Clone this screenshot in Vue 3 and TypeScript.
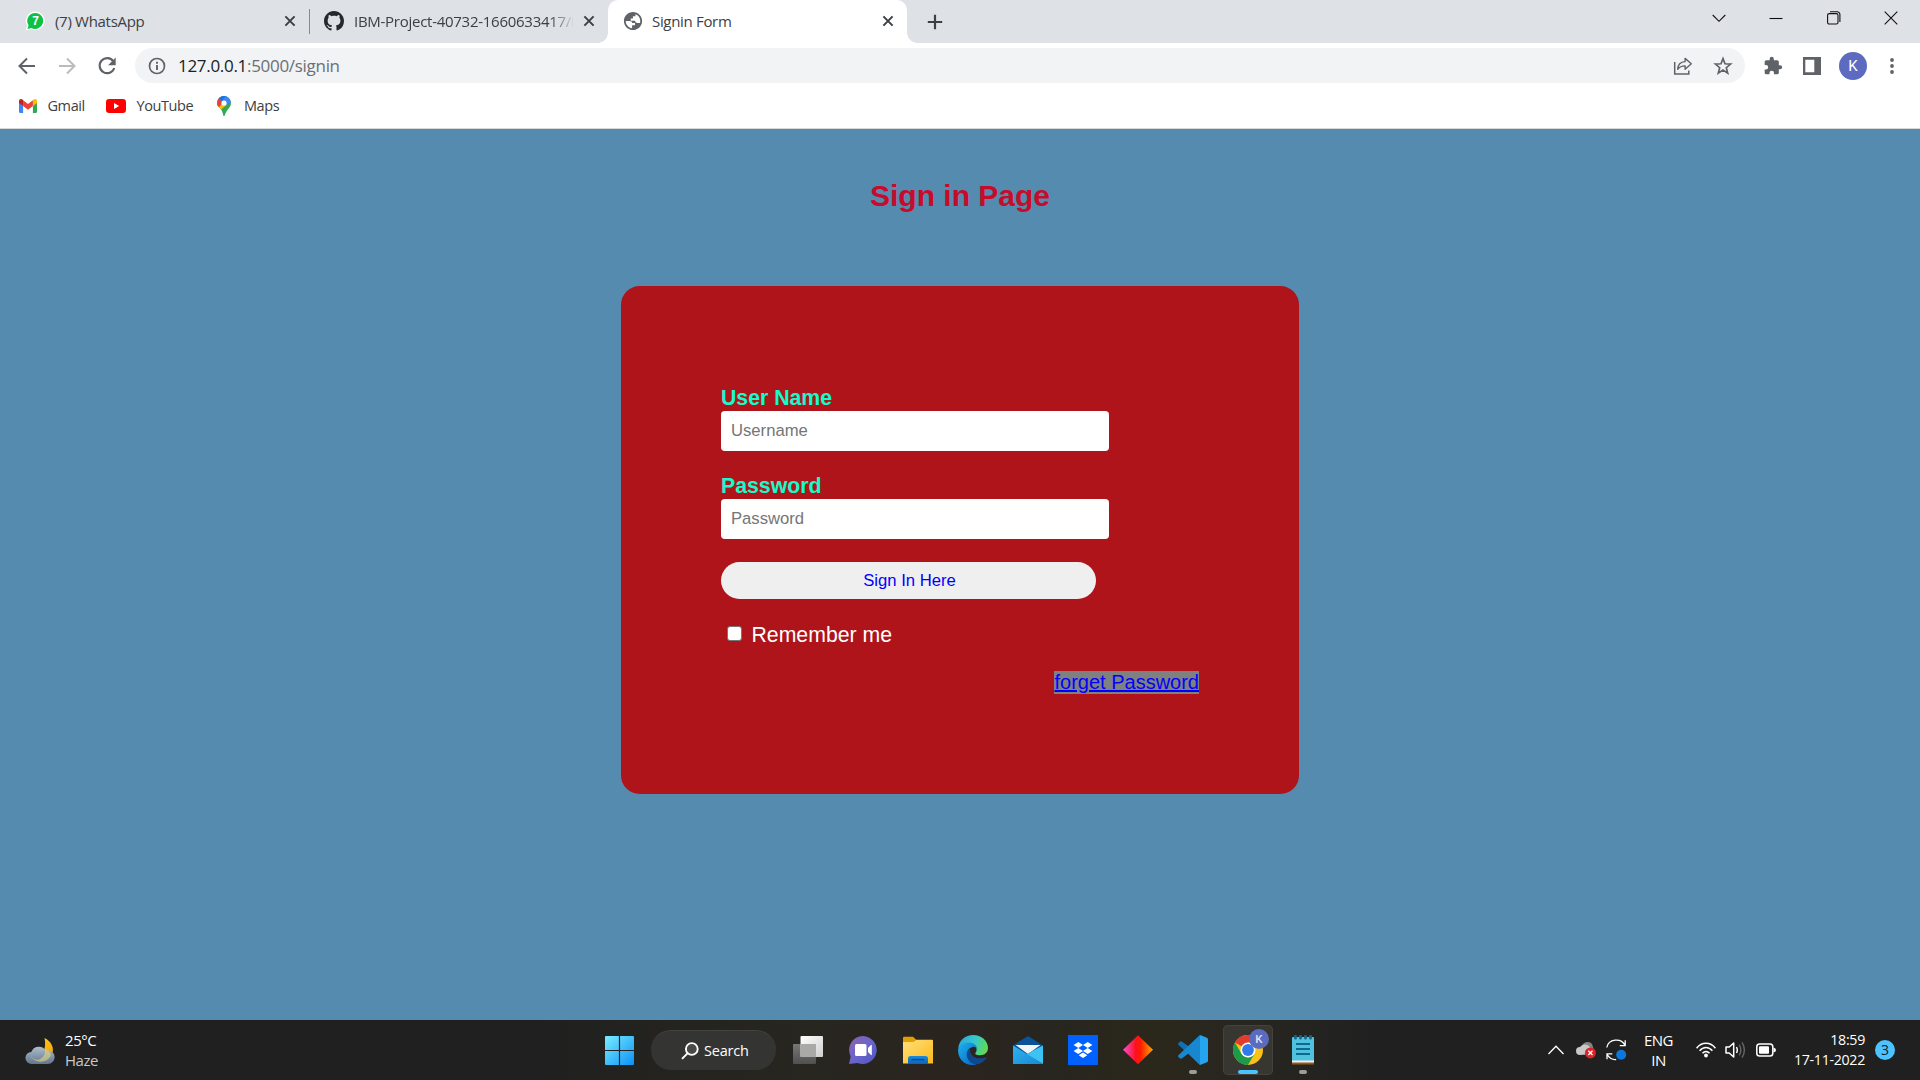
<script setup lang="ts">
import { ref } from 'vue'

interface Tab {
  id: string
  title: string
}

const tabs: Tab[] = [
  { id: 'whatsapp', title: '(7) WhatsApp' },
  { id: 'github', title: 'IBM-Project-40732-1660633417/I' },
  { id: 'globe', title: 'Signin Form' },
]
const activeTab = ref('globe')
const username = ref('')
const password = ref('')
const remember = ref(false)
</script>

<template>
  <div class="screen">
    <header class="tabstrip">
      <div
        v-for="tab in tabs"
        :key="tab.id"
        class="tab"
        :class="[tab.id, { active: tab.id === activeTab }]"
      >
        <svg v-if="tab.id === 'whatsapp'" class="fav" width="20" height="20" viewBox="0 0 20 20">
          <path d="M10.300 .6a9.300 9.300 0 1 1-4.400 17.500L.6 19.600l1.600-5A9.300 9.300 0 0 1 10.300 .6z" fill="#fff" />
          <path d="M10.300 1.900a8 8 0 1 1-4 15l-3.800 1 1.100-3.600A8 8 0 0 1 10.300 1.900z" fill="#0cc143" />
          <text x="10.500" y="14.400" text-anchor="middle" font-family="Liberation Sans" font-weight="700" font-size="12" fill="#fff">7</text>
        </svg>
        <svg v-else-if="tab.id === 'github'" class="fav" width="20" height="20" viewBox="0 0 16 16">
          <path fill="#24292f" d="M8 0C3.580 0 0 3.580 0 8c0 3.540 2.290 6.530 5.470 7.590.4.070.55-.17.55-.38 0-.19-.01-.82-.01-1.490-2.010.37-2.530-.49-2.690-.94-.09-.23-.48-.94-.82-1.130-.28-.15-.68-.52-.01-.53.63-.01 1.080.58 1.230.82.72 1.210 1.870.87 2.330.66.07-.52.28-.87.51-1.070-1.780-.2-3.640-.89-3.640-3.950 0-.87.31-1.590.82-2.150-.08-.2-.36-1.020.08-2.120 0 0 .67-.21 2.200.82.64-.18 1.320-.27 2-.27s1.360.09 2 .27c1.530-1.040 2.200-.82 2.200-.82.44 1.100.16 1.920.08 2.120.51.56.82 1.270.82 2.150 0 3.070-1.870 3.750-3.650 3.950.29.25.54.73.54 1.480 0 1.070-.01 1.930-.01 2.200 0 .21.15.46.55.38A8.010 8.010 0 0 0 16 8c0-4.420-3.580-8-8-8z" />
        </svg>
        <svg v-else class="fav" width="20" height="20" viewBox="1 1 22 22">
          <path fill="#5f6368" d="M12 2C6.480 2 2 6.480 2 12s4.480 10 10 10 10-4.480 10-10S17.520 2 12 2zm-1 17.930c-3.950-.49-7-3.850-7-7.930 0-.62.08-1.210.21-1.790L5 11h4.500l3 2v2.500l-2.500 1v3.430zM20 12c0 .8-.1 1.500-.3 2.200L17 13h-2l-1.500-2.500H10v-2.500l2.500-1.500V4.600C17 4.200 20 8 20 12z" fill-rule="evenodd" opacity="0" />
          <path fill="#5f6368" d="M12 2C6.480 2 2 6.480 2 12s4.480 10 10 10 10-4.480 10-10S17.520 2 12 2zm-1 17.930c-3.950-.49-7-3.850-7-7.930h4.500q2.500 0 2.700 2.200h3v2.500h-3.200zM19.700 14.200h-3.200q-2.200-.2-2.400-2.400H9.500V9.300h2.400V6.900h2.800V4.500c3.300 1 5.300 4 5.300 7.500q0 1.200-.3 2.200z" />
        </svg>
        <span class="tab-title">{{ tab.title }}</span>
        <svg class="close" width="12" height="12" viewBox="0 0 12 12">
          <path d="M1.400 1.400 10.600 10.600M10.600 1.400 1.400 10.600" stroke="#3c4043" stroke-width="2" fill="none" />
        </svg>
      </div>
      <svg class="plus" width="16" height="16" viewBox="0 0 16 16">
        <path d="M8 .8v14.400M.8 8h14.400" stroke="#3c4043" stroke-width="2.200" />
      </svg>
      <div class="win-controls">
        <svg width="14" height="14" viewBox="0 0 14 14"><path d="M.7 4 7 10.300 13.300 4" /></svg>
        <svg width="14" height="14" viewBox="0 0 14 14"><path d="M.5 7.500h13" /></svg>
        <svg width="14" height="14" viewBox="0 0 14 14">
          <rect x=".6" y="2.600" width="10.400" height="10.400" rx="1.600" />
          <path d="M3 .8h7.200A2.600 2.600 0 0 1 12.900 3.400V11" />
        </svg>
        <svg width="14" height="14" viewBox="0 0 14 14"><path d="M.7.7l12.600 12.600M13.300.7.7 13.300" /></svg>
      </div>
    </header>

    <div class="toolbar">
      <svg class="nav" width="24" height="24" viewBox="0 0 24 24">
        <path d="M20 12H5M12 4.500 4.500 12l7.500 7.500" stroke="#5f6368" stroke-width="2" fill="none" />
      </svg>
      <svg class="nav" width="24" height="24" viewBox="0 0 24 24">
        <path d="M4 12h15M12 4.500l7.500 7.500-7.500 7.500" stroke="#babcbe" stroke-width="2" fill="none" />
      </svg>
      <svg class="nav" width="24" height="24" viewBox="0 0 24 24">
        <path d="M18.300 7.300A7.500 7.500 0 1 0 19.300 14" stroke="#5f6368" stroke-width="2.100" fill="none" />
        <path d="M20.700 3.600v7.600h-7.600z" fill="#5f6368" />
      </svg>
      <div class="omnibox">
        <svg class="info" width="18" height="18" viewBox="0 0 18 18">
          <circle cx="9" cy="9" r="7.500" fill="none" stroke="#5f6368" stroke-width="1.700" />
          <path d="M9 8v5M9 4.800v1.900" stroke="#5f6368" stroke-width="1.900" />
        </svg>
        <span class="url"><b>127.0.0.1</b>:5000/signin</span>
        <svg class="share" width="20" height="20" viewBox="0 0 20 20">
          <path d="M1.700 6v11.900h14.100v-3.400" fill="none" stroke="#5f6368" stroke-width="1.500" />
          <path d="M4.700 13.300c.2-4.700 2.600-7.500 7.400-7.700V2.400l6.200 5.400-6.200 5.400V9.900c-3.300-.1-5.400.9-7.400 3.400z" fill="none" stroke="#5f6368" stroke-width="1.400" stroke-linejoin="round" />
        </svg>
        <svg class="star" width="20" height="20" viewBox="0 0 20 20">
          <path d="M10 2.600l2 5.200 5.600.3-4.300 3.600 1.400 5.400L10 14.100l-4.700 3 1.400-5.400-4.300-3.600 5.600-.3z" fill="none" stroke="#5f6368" stroke-width="1.700" />
        </svg>
      </div>
      <svg class="puzzle" width="20" height="20" viewBox="0 0 24 24">
        <path fill="#5f6368" d="M20.500 11H19V7a2 2 0 0 0-2-2h-4V3.500a2.500 2.500 0 0 0-5 0V5H4a2 2 0 0 0-2 2v3.800h1.500a2.700 2.700 0 0 1 0 5.400H2V20a2 2 0 0 0 2 2h3.800v-1.500a2.700 2.700 0 0 1 5.400 0V22H17a2 2 0 0 0 2-2v-4h1.500a2.500 2.500 0 0 0 0-5z" />
      </svg>
      <svg class="panel" width="18" height="18" viewBox="0 0 18 18">
        <path fill="#5f6368" fill-rule="evenodd" d="M0 0h18v18H0zM2.300 2.800v12.400h9V2.800z" />
      </svg>
      <span class="avatar">K</span>
      <svg class="dots" width="4" height="18" viewBox="0 0 4 18">
        <g fill="#5f6368"><circle cx="2" cy="3" r="1.900" /><circle cx="2" cy="9" r="1.900" /><circle cx="2" cy="15" r="1.900" /></g>
      </svg>
    </div>

    <nav class="bookmarks">
      <a class="bm gmail">
        <svg width="18" height="14" viewBox="0 0 18 14">
          <path d="M0 1.800V12.800C0 13.500.5 14 1.200 14H4.100V7z" fill="#4285f4" />
          <path d="M18 1.800V12.800C18 13.500 17.500 14 16.800 14H13.900V7z" fill="#34a853" />
          <path d="M13.900 1.200V7L18 3.900V2C18 .1 15.900-.6 14.500.6z" fill="#fbbc04" />
          <path d="M4.100 7V1.200L9 5l4.900-3.800V7L9 10.700z" fill="#ea4335" />
          <path d="M0 2v1.900L4.100 7V1.200L3.500.6C2.100-.6 0 .1 0 2z" fill="#c5221f" />
        </svg>
        <span>Gmail</span>
      </a>
      <a class="bm youtube">
        <svg width="20" height="14" viewBox="0 0 20 14">
          <rect width="20" height="14" rx="3.200" fill="#f00" /><path d="M8 4v6l5.200-3z" fill="#fff" />
        </svg>
        <span>YouTube</span>
      </a>
      <a class="bm maps">
        <svg width="14" height="20" viewBox="0 0 14 20">
          <defs><clipPath id="pin"><path d="M7 0a7 7 0 0 1 7 7c0 4.700-4.600 6.400-6.300 12.500q-.7 1-1.400 0C5.600 15.500 4.500 14 3 12.200 1.500 10.500 0 9.500 0 7a7 7 0 0 1 7-7z" /></clipPath></defs>
          <g clip-path="url(#pin)">
            <path d="M0 0h14v20H0z" fill="#34a853" />
            <path d="M-1 12 7 3l3 5.500L2.400 15z" fill="#fbbc04" />
            <path d="M-1 0h5l3 5-6 7.500-2-2z" fill="#ea4335" />
            <path d="M2 2.500 7-1h4l1 3.300L7 8z" fill="#4285f4" />
            <path d="M7 7l4.700-5.600L15 6 9 9z" fill="#4285f4" />
            <path d="M1.500 2.400 4.800 5 9 0H4z" fill="#1a73e8" />
          </g>
          <circle cx="7" cy="7" r="2.600" fill="#fff" />
        </svg>
        <span>Maps</span>
      </a>
    </nav>

    <main class="page">
      <h2>Sign in Page</h2>
      <form class="login" @submit.prevent>
        <label class="field-label" for="uname">User Name</label>
        <input id="uname" v-model="username" class="field" type="text" placeholder="Username">
        <label class="field-label second" for="pass">Password</label>
        <input id="pass" v-model="password" class="field" type="password" placeholder="Password">
        <button class="submit" type="submit">Sign In Here</button>
        <label class="remember">
          <input v-model="remember" type="checkbox">
          <span>Remember me</span>
        </label>
        <a class="forgot" href="#">forget Password</a>
      </form>
    </main>

    <footer class="taskbar">
      <div class="weather">
        <svg width="30" height="28" viewBox="0 0 30 28">
          <defs>
            <linearGradient id="cloud" x1="0" y1="0" x2="0" y2="1"><stop offset="0" stop-color="#aebdcd" /><stop offset="1" stop-color="#61778d" /></linearGradient>
            <linearGradient id="moon" x1="0" y1="0" x2="1" y2="1"><stop offset="0" stop-color="#ffd21c" /><stop offset="1" stop-color="#f59a0b" /></linearGradient>
          </defs>
          <path d="M19.500 1C26 4 30 11 27 17.500 24 24 16 27 9 23c8-2 13-11 10.500-22z" fill="url(#moon)" />
          <path d="M6.500 27a6 6 0 0 1-.2-12 8 8 0 0 1 14.500-1.300A6.800 6.800 0 1 1 22.500 27z" fill="url(#cloud)" />
          <path d="M19.500 11.500q2.200 7-5 11-5 1.500-9-3.500c3 6.500 16 9 20.500-1-1-4-4-5-6.500-6.500z" fill="#dccf82" opacity=".65" />
        </svg>
        <div><span class="temp">25°C</span><span class="cond">Haze</span></div>
      </div>

      <div class="apps">
        <svg class="start" width="29" height="29" viewBox="0 0 29 29">
          <defs><linearGradient id="win" x1="0" y1="0" x2="1" y2="1"><stop offset="0" stop-color="#79eeff" /><stop offset="1" stop-color="#0b90f8" /></linearGradient></defs>
          <path d="M0 1q0-1 1-1h12.900v13.900H0zM15.100 0H28q1 0 1 1v12.900H15.100zM0 15.100h13.900V29H1q-1 0-1-1zM15.100 15.100H29V28q0 1-1 1H15.100z" fill="url(#win)" />
        </svg>
        <div class="search">
          <svg width="18" height="18" viewBox="0 0 18 18"><circle cx="10.800" cy="7" r="5.900" fill="#4a4a46" /><path d="M6.500 11.300 1 16.800" /></svg>
          <span>Search</span>
        </div>

        <div class="app">
          <svg width="30" height="30" viewBox="0 0 30 30">
            <defs>
              <linearGradient id="tvA" x1="0" y1="0" x2="1" y2="1"><stop stop-color="#fff" /><stop offset="1" stop-color="#cfcfcf" /></linearGradient>
              <linearGradient id="tvB" x1="0" y1="0" x2="0" y2="1"><stop stop-color="#777" /><stop offset="1" stop-color="#505050" /></linearGradient>
            </defs>
            <rect x="0" y="9" width="23" height="20" rx="1" fill="url(#tvB)" /><rect x="7.500" y="1" width="22.500" height="21" rx="1" fill="url(#tvA)" />
            <path d="M7.500 9H23v13H7.500z" fill="#a9a9a8" />
          </svg>
        </div>
        <div class="app">
          <svg width="30" height="30" viewBox="0 0 30 30">
            <defs><linearGradient id="chat" x1="0" y1="0" x2="1" y2="1"><stop offset="0" stop-color="#8f62ad" /><stop offset=".5" stop-color="#6a65cb" /><stop offset="1" stop-color="#4f55c4" /></linearGradient></defs>
            <path d="M15 1A14 14 0 1 1 9.500 28L1 29l1.700-7.500A14 14 0 0 1 15 1z" fill="url(#chat)" />
            <rect x="7" y="9" width="11.500" height="12" rx="1.500" fill="#fff" /><path d="M20 13l3-3q.8-.5.800.5v9q0 1-.8.500l-3-3z" fill="#fff" />
          </svg>
        </div>
        <div class="app">
          <svg width="30" height="30" viewBox="0 0 30 30">
            <defs>
              <linearGradient id="fold" x1="0" y1="0" x2="1" y2="1"><stop stop-color="#ffe07c" /><stop offset="1" stop-color="#fcb919" /></linearGradient>
              <linearGradient id="tray" x1="0" y1="0" x2="0" y2="1"><stop stop-color="#1a8ae0" /><stop offset="1" stop-color="#0c64b5" /></linearGradient>
            </defs>
            <path d="M0 3q0-1.200 1.200-1.200H10L13.500 5v5H0z" fill="#dfa000" />
            <path d="M0 7h10.500l3-2.200H29q1 0 1 1V28.500H0z" fill="url(#fold)" />
            <path d="M5 29v-5.500Q5 21 7.500 21h15q2.500 0 2.500 2.500V29z" fill="url(#tray)" /><path d="M8.500 24.600h13" stroke="#084a88" stroke-width="1.400" />
          </svg>
        </div>
        <div class="app">
          <svg width="30" height="30" viewBox="0 0 30 30">
            <defs>
              <linearGradient id="eg1" x1="0" y1=".3" x2="1" y2=".6"><stop stop-color="#2ba7dd" /><stop offset=".5" stop-color="#35c8cb" /><stop offset="1" stop-color="#62dc4d" /></linearGradient>
              <linearGradient id="eg2" x1="0" y1="0" x2="1" y2="1"><stop stop-color="#1cb3f0" /><stop offset="1" stop-color="#0b61bd" /></linearGradient>
            </defs>
            <path d="M.2 13C1.300 5 7.500 0 15 0c8.500 0 15 6 15 12.700 0 4.800-3.500 7.500-8 7.500-4 0-5.300-1.400-4.500-2.500 2.700-3.500.5-7-4-7.700C8.500 9 3 10 .2 13z" fill="url(#eg1)" />
            <path d="M.1 14.200C1.500 9.500 6.500 7.200 11.300 7.400c5 .2 8 3.600 8 6.800-1.300-2.300-3-2.700-4.800-2.200-4 1-6 5-5 9 1.200 4.500 4.500 7.200 9 8.400C9 32 .3 25.500.1 16z" fill="url(#eg2)" />
            <path d="M12.200 12.900C9 15 8.400 18.500 9 21.500c1.300 5.200 6 8.500 10.500 7.700 3.800-.8 6.800-3 9-6.300.3-.6-.2-1-.8-.7-7 3-14.700 0-15.500-6.300-.1-1.300 0-2.200 0-3z" fill="#10488f" />
          </svg>
        </div>
        <div class="app">
          <svg width="30" height="30" viewBox="0 0 30 30">
            <defs><linearGradient id="ml" x1="0" y1="0" x2="1" y2="1"><stop stop-color="#2fb4ee" /><stop offset="1" stop-color="#1689d4" /></linearGradient></defs>
            <path d="M0 10.500 15 1l15 9.500V20H0z" fill="#0c5296" /><path d="M2.500 10h25L15 19z" fill="#f4f4f4" />
            <path d="M30 10.500V29L13 19.300z" fill="#3cc3f2" /><path d="M0 10.500V29h30z" fill="url(#ml)" />
          </svg>
        </div>
        <div class="app">
          <svg width="30" height="30" viewBox="0 0 30 30">
            <path d="M0 0h30v30H0z" fill="#0061ff" />
            <path d="M10.300 7l4.700 3-4.700 3-4.700-3zM19.700 7l4.700 3-4.700 3-4.700-3zM10.300 13l4.700 3-4.700 3-4.700-3zM19.700 13l4.700 3-4.700 3-4.700-3zM15 17.400l4.300 2.900L15 23l-4.300-2.700z" fill="#fff" />
          </svg>
        </div>
        <div class="app">
          <svg width="30" height="30" viewBox="0 0 30 30">
            <defs><linearGradient id="dia"><stop offset="0" stop-color="#f653d8" /><stop offset=".42" stop-color="#ff1020" /><stop offset=".58" stop-color="#ff1a00" /><stop offset="1" stop-color="#ffa800" /></linearGradient></defs>
            <path d="M15 .2 30 14.700 15 29.200 0 14.700z" fill="url(#dia)" />
          </svg>
        </div>
        <div class="app running">
          <svg width="30" height="30" viewBox="0 0 30 30">
            <path d="M22 0 10.500 11.300 3.800 6.500Q2.500 6 1.200 7.200L.4 8Q-.2 9 .6 10L22 30l.6-8.500z" fill="#0f70b3" />
            <path d="M22 30 10.500 18.500 3.800 23.500q-1.300.5-2.600-.7L.4 22q-.6-1 .2-2L22 0l.6 8.500z" fill="#1787cf" />
            <path d="M22 0l7 2.800q1 .6 1 1.700v21q0 1.100-1 1.700L22 30z" fill="#25a5f0" />
          </svg>
        </div>
        <div class="app current">
          <svg width="30" height="30" viewBox="0 0 30 30">
            <circle cx="15" cy="15" r="15" fill="#fbc116" />
            <path d="M15 15 2 7.500A15 15 0 0 1 28 7.500H15z" fill="#e33b2e" />
            <path d="M2 7.500A15 15 0 0 0 15 30l6.500-11.300-6.500 3.800-6.500-3.800z" fill="#1f9a48" />
            <circle cx="15" cy="15" r="7.500" fill="#fff" /><circle cx="15" cy="15" r="5.900" fill="#3279ea" />
          </svg>
          <span class="mini-avatar">K</span>
        </div>
        <div class="app running">
          <svg width="22" height="30" viewBox="0 0 22 30">
            <path d="M0 26h22v3.500H0z" fill="#9c5418" /><path d="M0 25h22v2.500H0z" fill="#eee" />
            <path d="M0 3q0-1 1-1h20q1 0 1 1v22.500H0z" fill="#50c1de" />
            <path d="M4 9h14M4 14h14M4 19h14" stroke="#0c6a8c" stroke-width="1.800" />
            <path d="M3.500 1.200v2M8.500 1.200v2M13.500 1.200v2M18.500 1.200v2" stroke="#136989" stroke-width="2.800" stroke-linecap="round" />
          </svg>
        </div>
      </div>

      <div class="tray">
        <svg class="up" width="16" height="10" viewBox="0 0 16 10"><path d="M.5 9 8 1.200 15.500 9" stroke="#fff" stroke-width="1.300" fill="none" /></svg>
        <svg class="cloud" width="20" height="18" viewBox="0 0 20 18">
          <path d="M8 12a4 4 0 0 1-2-7.500A6 6 0 0 1 16 3l3 9z" fill="#858585" /><path d="M4 14a4 4 0 0 1 0-8 6 6 0 0 1 9.500-.5L17 13z" fill="#c9c9c9" />
          <circle cx="14.400" cy="11.900" r="5.500" fill="#dc2329" /><path d="M12.300 9.800l4.200 4.200m0-4.200-4.200 4.200" stroke="#fff" stroke-width="1.300" />
        </svg>
        <svg class="sync" width="21" height="22" viewBox="0 0 21 22">
          <path d="M.8 8.500C2.500-.3 15-1.500 19 6.200M19.200 1.300v5.300h-5.400M1 20.300v-5.400h5.300M1.200 15.500q3 5.500 9 5" stroke="#fff" stroke-width="1.300" fill="none" />
          <circle cx="15.200" cy="15.800" r="5" fill="#0c78dc" />
        </svg>
        <div class="lang"><span>ENG</span><span>IN</span></div>
        <svg class="wifi" width="20" height="16" viewBox="0 0 20 16">
          <g fill="none" stroke="#fff" stroke-width="1.500"><path d="M.6 6.300C5.500-.3 14.500-.3 19.400 6.300M3.600 8.800c3.700-4.500 9.100-4.500 12.800 0M6.500 11.300c2-2.400 5-2.400 7 0" /></g>
          <circle cx="10" cy="13.500" r="1.900" fill="#fff" />
        </svg>
        <svg class="vol" width="21" height="18" viewBox="0 0 21 18">
          <path d="M1 6h3.200L8.700 2v14L4.200 12H1z" fill="none" stroke="#fff" stroke-width="1.500" stroke-linejoin="round" />
          <path d="M11.500 6q1.700 3 0 6" stroke="#fff" stroke-width="1.400" fill="none" />
          <path d="M14.200 3.600q3.300 5.400 0 10.800M17 1.300q4.800 7.700 0 15.400" stroke="#666" stroke-width="1.400" fill="none" />
        </svg>
        <svg class="bat" width="20" height="14" viewBox="0 0 20 14">
          <rect x=".8" y="1" width="16" height="12" rx="2.800" fill="none" stroke="#fff" stroke-width="1.500" /><rect x="3" y="3.200" width="10" height="7.600" rx="1" fill="#fff" />
          <path d="M17.500 4.500q2.500.5 2.500 2.500t-2.500 2.500z" fill="#fff" />
        </svg>
        <div class="clock"><span>18:59</span><span>17-11-2022</span></div>
        <span class="badge">3</span>
      </div>
    </footer>
  </div>
</template>

<style>
body { margin: 0; overflow: hidden; }
</style>

<style scoped>
.screen {
  width: 1920px;
  height: 1080px;
  display: flex;
  flex-direction: column;
  overflow: hidden;
  font-family: "Open Sans", "Noto Sans", sans-serif;
  font-size: 15px;
  color: #3c4043;
  background: #fff;
}
svg { flex: none; display: block; }
.screen * { box-sizing: border-box; }

/* Browser chrome */
.tabstrip { height: 43px; flex: none; display: flex; align-items: center; background: #dee1e6; }
.tab { display: flex; align-items: center; height: 43px; padding-bottom: 1px; white-space: nowrap; }
.tab-title { flex: 1; overflow: hidden; letter-spacing: -0.3px; line-height: 24px; margin-top: -1px; }
.whatsapp { width: 310px; padding-left: 25px; padding-right: 14px; background: linear-gradient(#858a90, #858a90) right center / 1px 25px no-repeat; }
.whatsapp .tab-title { margin-left: 10px; }
.github { width: 298px; padding-left: 14px; padding-right: 13px; }
.github .tab-title {
  margin-left: 10px;
  margin-right: 10px;
  letter-spacing: -0.27px;
  -webkit-mask-image: linear-gradient(90deg, #000 195px, transparent 221px);
  mask-image: linear-gradient(90deg, #000 195px, transparent 221px);
}
.globe { width: 299px; padding-left: 15px; padding-right: 13px; position: relative; }
.globe .tab-title { margin-left: 9px; letter-spacing: -0.32px; }
.active { background: #fff; border-radius: 10px 10px 0 0; }
.active::before, .active::after { content: ""; position: absolute; bottom: 0; width: 10px; height: 10px; }
.active::before { left: -10px; background: radial-gradient(circle at 0 0, transparent 9.500px, #fff 10px); }
.active::after { right: -10px; background: radial-gradient(circle at 100% 0, transparent 9.500px, #fff 10px); }
.plus { margin-left: 20px; }
.win-controls { margin-left: auto; margin-right: 22px; margin-top: -7px; display: flex; gap: 43.300px; }
.win-controls svg { fill: none; stroke: #111; stroke-width: 1.100; }

.toolbar { height: 45px; flex: none; display: flex; align-items: center; padding-left: 15px; }
.nav { margin-right: 16.200px; }
.omnibox { width: 1610px; height: 35px; margin-left: -0.600px; border-radius: 18px; background: #f1f3f4; display: flex; align-items: center; }
.info { margin-left: 13.500px; }
.url { flex: 1; margin-left: 11.500px; font-size: 17px; letter-spacing: -0.3px; color: #6b6f74; line-height: 34px; }
.url b { font-weight: 400; color: #202124; }
.share { margin-right: 20px; }
.star { margin-right: 12px; }
.puzzle { margin-left: 18px; }
.panel { margin-left: 20.500px; }
.avatar { width: 28px; height: 28px; margin-left: 17.500px; border-radius: 50%; background: #5c6bc0; color: #fff; font: 15px/28px Roboto, sans-serif; text-align: center; }
.dots { margin-left: 23.500px; }

.bookmarks { height: 41px; flex: none; display: flex; align-items: center; padding: 0 0 5px 19px; border-bottom: 1px solid #d5d8dc; font-size: 14.500px; }
.bm { display: flex; align-items: center; letter-spacing: -0.42px; }
.bm svg { margin-top: 1px; }
.gmail { width: 87px; gap: 10.500px; }
.youtube { width: 111px; gap: 10.500px; }
.maps { gap: 13px; }

/* Sign-in page */
.page { flex: 1; display: flex; flex-direction: column; align-items: center; background: #558bae; font-family: "Liberation Sans", Arial, sans-serif; font-size: 21.250px; }
h2 { margin: 49px 0 73px; font-size: 30px; line-height: 35px; color: #c60b2b; }
.login { width: 678px; height: 508px; padding: 100px; border-radius: 18.750px; background: #ae141a; display: flex; flex-direction: column; align-items: flex-start; }
.field-label { line-height: 25px; font-weight: 700; color: #14fccc; }
.second { margin-top: 23px; }
.field { width: 388px; height: 40px; margin: 0; padding: 0 10px; border: 0; border-radius: 3.750px; background: #fff; font: 16.667px "Liberation Sans", Arial, sans-serif; outline: 0; }
.field::placeholder { color: #757575; }
.submit { width: 375px; height: 37px; margin-top: 23px; padding: 0 0 0 2px; border: 0; border-radius: 18.750px; background: #efefef; color: #00f; font: 16.667px "Liberation Sans", Arial, sans-serif; }
.remember { display: flex; align-items: center; margin-top: 24px; color: #fff; line-height: 25px; }
.remember input { appearance: none; width: 15px; height: 15px; margin: 0 10px 5px 5.500px; border: 1px solid #767676; border-radius: 3px; background: #fff; }
.forgot { align-self: flex-end; margin-top: 23px; line-height: 23px; font-size: 20px; color: #00f; background: #808080; text-decoration: underline; }

/* Taskbar */
.taskbar { height: 60px; flex: none; display: flex; align-items: center; color: #fff; background: linear-gradient(90deg, #202020 0, #202020 28%, #27261f 42%, #2b241f 51%, #27261f 55%, #2b271b 60%, #272620 65%, #202020 72%); }
.weather { width: 605px; display: flex; align-items: center; padding-left: 25px; padding-bottom: 1px; }
.weather svg { margin-top: 3px; }
.weather div { display: flex; flex-direction: column; margin-left: 10px; line-height: 20px; letter-spacing: -0.45px; }
.cond { color: #c8c8c8; }
.apps { display: flex; align-items: center; }
.start { margin-top: 1px; }
.search { width: 125px; height: 40px; margin: 0 4.500px 0 17px; padding: 0 0 0 29.500px; border-radius: 20px; background: #343432; border-top: 1px solid #424240; display: flex; align-items: center; font-size: 14.500px; letter-spacing: -0.2px; }
.search svg { fill: none; stroke: #fff; stroke-width: 1.900; }
.search span { margin-left: 5.500px; }
.app { position: relative; width: 50px; height: 50px; margin-left: 2.500px; margin-right: 2.500px; border-radius: 5px; display: flex; align-items: center; justify-content: center; }
.current { background: #383630; box-shadow: inset 0 0 0 1px #44423d; }
.running::after, .current::after { content: ""; position: absolute; bottom: 1px; left: 21px; width: 8px; height: 4px; border-radius: 2px; background: #9c9c9a; }
.current::after { left: 15px; width: 20px; background: #4cc2ff; }
.mini-avatar { position: absolute; left: 26px; top: 4px; width: 20px; height: 20px; border-radius: 50%; background: #5c6bc0; color: #dfe2f2; font: 500 11.500px/20px Roboto, sans-serif; text-align: center; }
.tray { margin-left: auto; display: flex; align-items: center; }
.cloud { margin-left: 12px; }
.sync { margin-left: 10px; }
.lang { width: 40px; margin-left: 11.500px; margin-right: 0.500px; display: flex; flex-direction: column; align-items: center; line-height: 20px; letter-spacing: -0.5px; }
.wifi { margin-left: 17px; }
.vol { margin-left: 9px; }
.bat { margin-left: 10px; }
.clock { width: 89px; display: flex; flex-direction: column; align-items: flex-end; padding-bottom: 1px; line-height: 20px; font-size: 14.200px; letter-spacing: -0.3px; }
.badge { width: 20px; height: 20px; margin: 0 25px 0 10px; border-radius: 50%; background: #4cc2ff; color: #10202b; font-size: 14px; line-height: 20px; text-align: center; }
</style>
